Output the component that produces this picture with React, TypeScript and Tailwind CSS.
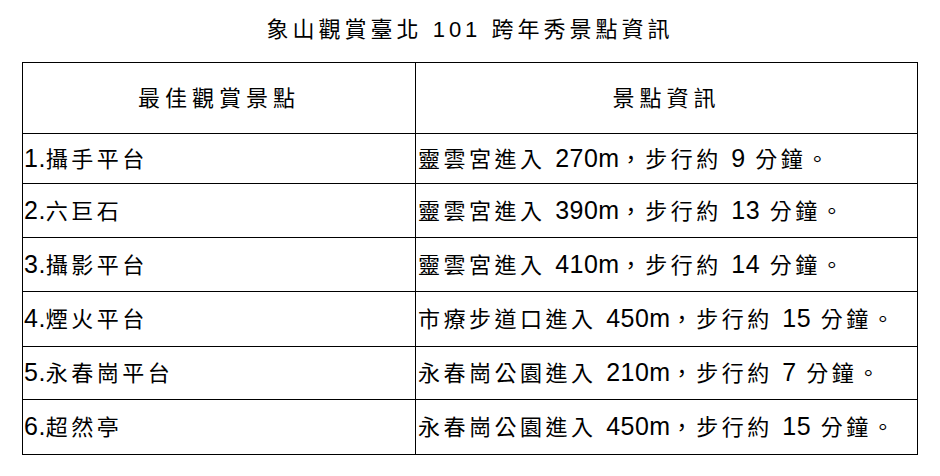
const rows = [
  { name: '1.攝手平台', info: '靈雲宮進入 270m，步行約 9 分鐘。', h: 'h-[50px]' },
  { name: '2.六巨石', info: '靈雲宮進入 390m，步行約 13 分鐘。', h: 'h-[54px]' },
  { name: '3.攝影平台', info: '靈雲宮進入 410m，步行約 14 分鐘。', h: 'h-[54px]' },
  { name: '4.煙火平台', info: '市療步道口進入 450m，步行約 15 分鐘。', h: 'h-[55px]' },
  { name: '5.永春崗平台', info: '永春崗公園進入 210m，步行約 7 分鐘。', h: 'h-[53px]' },
  { name: '6.超然亭', info: '永春崗公園進入 450m，步行約 15 分鐘。', h: 'h-[55px]' },
];

// numbers in the table are set in a larger Arial-like face than the CJK text
function Mixed({ text }: { text: string }) {
  const parts = text.split(/([0-9]+m|[0-9]+\.|[0-9]+)/);
  return (
    <>
      {parts.map((p, i) =>
        /[0-9]/.test(p) ? (
          <span key={i} className="text-[25px] leading-none tracking-[0.5px]">
            {p}
          </span>
        ) : (
          <span key={i}>{p}</span>
        ),
      )}
    </>
  );
}

export default function App() {
  return (
    <div className="h-[476px] w-[940px] bg-white text-black font-['Liberation_Sans','Noto_Sans_CJK_TC',sans-serif]">
      <div className="flex h-[62px] items-center justify-center pb-[4px] text-[22px] tracking-[4px]">
        象山觀賞臺北 101 跨年秀景點資訊
      </div>
      <div className="ml-[22px] w-[896px] border border-black text-[22px] tracking-[3.5px]">
        <div className="flex h-[70px]">
          <div className="flex w-[393px] items-center justify-center border-r border-black tracking-[5px]">
            最佳觀賞景點
          </div>
          <div className="flex flex-1 items-center justify-center tracking-[5px]">
            景點資訊
          </div>
        </div>
        {rows.map((r) => (
          <div key={r.name} className={`flex border-t border-black ${r.h}`}>
            <div className="flex w-[393px] items-center border-r border-black pl-[1px] pt-[2px]">
              <div className="leading-[30px]">
                <Mixed text={r.name} />
              </div>
            </div>
            <div className="flex flex-1 items-center pl-[2px] pt-[2px] whitespace-nowrap">
              <div className="leading-[30px]">
                <Mixed text={r.info} />
              </div>
            </div>
          </div>
        ))}
      </div>
    </div>
  );
}
